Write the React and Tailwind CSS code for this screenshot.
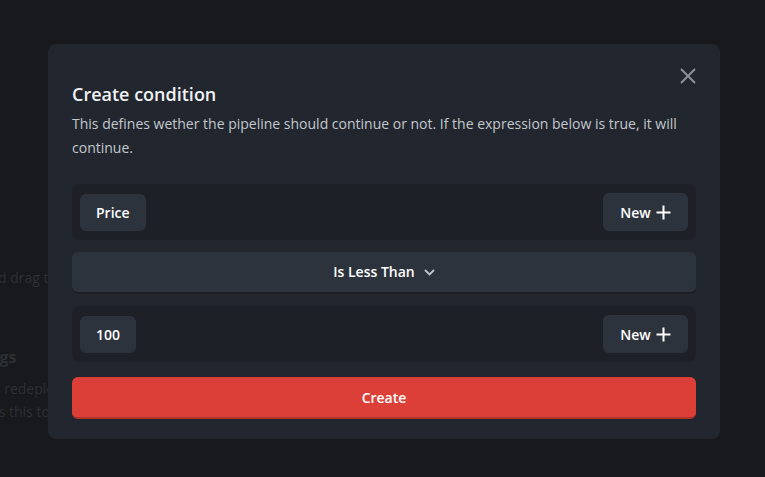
import React from "react";

function PlusIcon() {
  return (
    <svg width="15" height="15" viewBox="0 0 15 15" fill="none">
      <path d="M7.5 0.5V14.5M0.5 7.5H14.5" stroke="#ffffff" strokeWidth="2" />
    </svg>
  );
}

function Row({ label }) {
  return (
    <div className="flex items-center justify-between h-[56px] rounded-lg bg-[#1e2028] px-2">
      <button className="h-[37px] px-4 rounded-md bg-[#2d333d] text-white text-[14px] font-semibold">
        {label}
      </button>
      <button className="h-[38px] w-[85px] flex items-center justify-center gap-[5px] rounded-md bg-[#2d333d] text-white text-[14px] font-semibold">
        <span>New</span>
        <PlusIcon />
      </button>
    </div>
  );
}

export default function App() {
  return (
    <div
      className="relative w-[765px] h-[477px] overflow-hidden bg-[#17191c]"
      style={{ fontFamily: '"Open Sans", "Noto Sans", sans-serif' }}
    >
      <div className="flex flex-col pt-[267px] text-[#2d3035] text-[14px]">
        <div className="-ml-[52px] whitespace-nowrap">Click and drag to move nodes</div>
        <div className="-ml-[48px] mt-[57px] whitespace-nowrap font-bold text-[16px]">Settings</div>
        <div className="-ml-[23px] mt-[9px] whitespace-nowrap">Will redeploy the pipeline</div>
        <div className="-ml-[26px] mt-[2px] whitespace-nowrap">Uses this to configure</div>
      </div>

      <div className="absolute left-[48px] top-[44px] w-[672px] rounded-lg bg-[#22272f] px-6 pt-[36px] pb-[20px]">
        <button className="absolute right-[24px] top-[24px] p-0">
          <svg width="16" height="16" viewBox="0 0 16 16" fill="none">
            <path d="M1 1L15 15M15 1L1 15" stroke="#8b919b" strokeWidth="2" />
          </svg>
        </button>
        <h2 className="text-[18px] leading-[28px] font-semibold text-[#f1f2f4]">Create condition</h2>
        <p className="mt-[4px] text-[14px] leading-[24px] text-[#c3c7ce]">
          This defines wether the pipeline should continue or not. If the expression below is true, it will continue.
        </p>

        <div className="mt-[24px] flex flex-col">
          <Row label="Price" />
          <button className="mt-[12px] h-[40px] w-full flex items-center justify-center gap-[9px] rounded-md bg-[#2d333d] shadow-[0_2px_0_#1c1f25] text-white text-[14px] font-semibold">
            <span className="-mt-[2px]">Is Less Than</span>
            <svg width="11" height="7" viewBox="0 0 11 7" fill="none">
              <path d="M1 1L5.5 5.5L10 1" stroke="#c0c4cc" strokeWidth="1.8" />
            </svg>
          </button>
          <div className="mt-[14px]">
            <Row label="100" />
          </div>
          <button className="mt-[15px] h-[42px] w-full rounded-md bg-[#dc3f37] border-b-2 border-[#b3322c] text-white text-[14px] font-semibold">
            Create
          </button>
        </div>
      </div>
    </div>
  );
}
